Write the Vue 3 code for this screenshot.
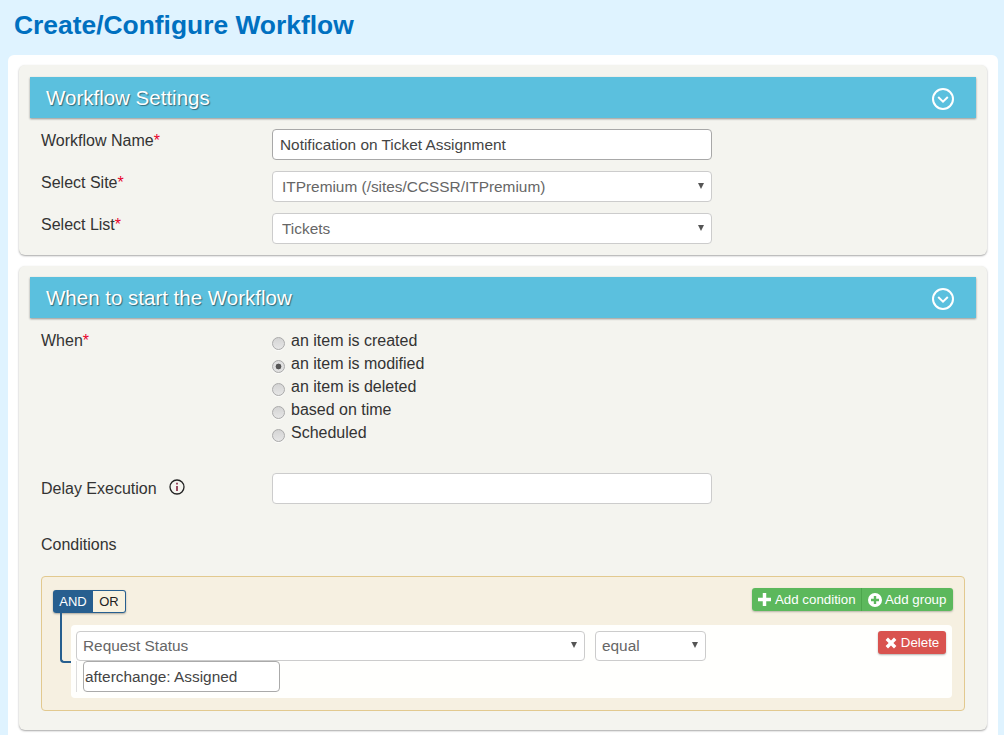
<script setup>
import { ref } from 'vue'

const triggers = ['an item is created', 'an item is modified', 'an item is deleted', 'based on time', 'Scheduled']
const selected = ref('an item is modified')
</script>

<template>
  <div class="page">
    <h1 class="title">Create/Configure Workflow</h1>
    <div class="card">
      <section class="panel">
        <header class="bar">
          <span>Workflow Settings</span>
          <svg class="chev" viewBox="0 0 22 22"><circle cx="11" cy="11" r="10" /><path d="M6.2 9 11 13.6 15.8 9" /></svg>
        </header>
        <div class="row">
          <label class="lbl">Workflow Name<i>*</i></label>
          <input class="ctl strong" value="Notification on Ticket Assignment" />
        </div>
        <div class="row">
          <label class="lbl">Select Site<i>*</i></label>
          <div class="sel ctl-w"><select class="ctl wide"><option>ITPremium (/sites/CCSSR/ITPremium)</option></select></div>
        </div>
        <div class="row">
          <label class="lbl">Select List<i>*</i></label>
          <div class="sel ctl-w"><select class="ctl wide"><option>Tickets</option></select></div>
        </div>
      </section>

      <section class="panel second">
        <header class="bar">
          <span>When to start the Workflow</span>
          <svg class="chev" viewBox="0 0 22 22"><circle cx="11" cy="11" r="10" /><path d="M6.2 9 11 13.6 15.8 9" /></svg>
        </header>
        <div class="when">
          <label class="lbl">When<i>*</i></label>
          <div class="radios">
            <label v-for="t in triggers" :key="t" class="radio">
              <input v-model="selected" type="radio" name="when" :value="t" />
              <span>{{ t }}</span>
            </label>
          </div>
        </div>
        <div class="row delay">
          <label class="lbl">Delay Execution
            <svg class="info" viewBox="0 0 16 16"><circle cx="8" cy="8" r="7" /><path d="M8 7v5" /><path class="dot" d="M8 3.8v1.6" /></svg>
          </label>
          <input class="ctl" />
        </div>
        <div class="cond-title">Conditions</div>

        <div class="group">
          <div class="toolbar">
            <div class="andor">
              <span class="and">AND</span>
              <span class="or">OR</span>
            </div>
            <div class="adds">
              <button class="add">
                <svg viewBox="0 0 12 12"><path d="M4.400 0h3.200v4.400H12v3.200H7.600V12H4.400V7.600H0V4.400h4.400z" /></svg>
                Add condition
              </button>
              <button class="add">
                <svg viewBox="0 0 14 14"><path fill-rule="evenodd" d="M7 0a7 7 0 1 1 0 14A7 7 0 0 1 7 0zM5.800 3v2.800H3v2.400h2.800V11h2.400V8.200H11V5.800H8.200V3z" /></svg>
                Add group
              </button>
            </div>
          </div>
          <div class="rule">
            <div class="rule-top">
              <div class="sel field"><select class="ctl"><option>Request Status</option></select></div>
              <div class="sel op"><select class="ctl"><option>equal</option></select></div>
              <button class="del">
                <svg viewBox="0 0 12 12"><path d="M3 .6 6 3.600 9 .6 11.400 3 8.400 6l3 3L9 11.400l-3-3-3 3L.6 9l3-3-3-3z" /></svg>
                Delete
              </button>
            </div>
            <div class="rule-val">
              <input class="val" value="afterchange: Assigned" />
            </div>
          </div>
        </div>
      </section>
    </div>
  </div>
</template>

<style>
html, body { margin: 0; height: 100%; overflow: hidden; background: #dff3ff; }
</style>

<style scoped>
.page {
  height: 735px;
  overflow: hidden;
  background: #dff3ff;
  font-family: "Liberation Sans", Arial, sans-serif;
  color: #333;
  font-size: 16px;
}
.title {
  margin: 0;
  height: 55px;
  padding: 9px 0 0 14px;
  box-sizing: border-box;
  font-size: 26.400px;
  line-height: 32px;
  font-weight: 700;
  color: #0070c0;
}
.card {
  margin: 0 6px 0 8px;
  padding: 10px 11px;
  height: 700px;
  box-sizing: border-box;
  background: #fff;
  border-radius: 6px;
}
.panel {
  padding: 12px 11px 11px;
  background: #f4f4ef;
  border-radius: 6px;
  box-shadow: 0 1px 2px rgba(0, 0, 0, 0.35);
}
.second {
  margin-top: 11px;
  padding-top: 11px;
  padding-bottom: 19px;
}
.bar {
  height: 41px;
  padding: 0 22px 0 16px;
  box-sizing: border-box;
  display: flex;
  align-items: center;
  justify-content: space-between;
  background: #5bc0de;
  color: #fff;
  font-size: 20.500px;
  line-height: 24px;
  text-shadow: 1px 1px 1px rgba(0, 0, 0, 0.45);
  box-shadow: 0 1px 2px rgba(0, 0, 0, 0.4);
}
.chev {
  width: 22px;
  height: 22px;
  margin-top: 2px;
  fill: none;
  stroke: #fff;
  stroke-width: 2;
}
.row {
  display: flex;
  align-items: flex-start;
  margin-top: 11px;
  padding-left: 11px;
}
.lbl {
  flex: 0 0 231px;
  line-height: 24px;
  color: #333;
}
.lbl i {
  color: #e8002b;
  font-style: normal;
}
.ctl {
  display: block;
  width: 440px;
  height: 31px;
  box-sizing: border-box;
  padding: 0 7px;
  font: 15.400px "Liberation Sans", Arial, sans-serif;
  color: #444;
  background: #fff;
  border: 1px solid #ccc;
  border-radius: 4px;
  outline: none;
}
.strong { border-color: #a8a8a8; }
.ctl-w { width: 440px; }
.sel { position: relative; }
.sel select {
  appearance: none;
  -webkit-appearance: none;
  width: 100%;
  color: #666;
  padding-left: 6px;
}
.sel select.wide { padding-left: 9px; }
.sel::after {
  content: "";
  position: absolute;
  right: 8px;
  top: 12px;
  border-left: 3.500px solid transparent;
  border-right: 3.500px solid transparent;
  border-top: 6px solid #555;
  pointer-events: none;
}
.when {
  display: flex;
  margin-top: 11px;
  padding-left: 11px;
}
.when .lbl { line-height: 23px; }
.radios { display: flex; flex-direction: column; }
.radio {
  display: flex;
  align-items: center;
  height: 23px;
  color: #333;
}
.radio input {
  appearance: none;
  -webkit-appearance: none;
  width: 13px;
  height: 13px;
  margin: 6px 6px 0 0;
  box-sizing: border-box;
  border: 1px solid #aaa;
  border-radius: 50%;
  background: linear-gradient(#d4d4d4, #e6e6e6);
  box-shadow: 0 1px 1px rgba(255, 255, 255, 0.8);
}
.radio input:checked {
  background: radial-gradient(circle, #555 0 2.600px, #e0e0e0 3.200px);
}
.delay { margin-top: 29px; }
.delay .lbl { line-height: 31px; }
.info {
  width: 16px;
  height: 16px;
  margin-left: 8px;
  vertical-align: -1px;
  fill: none;
  stroke: #222;
  stroke-width: 1.300;
}
.info path { stroke: #7a1230; stroke-width: 1.500; }
.cond-title {
  margin-top: 30px;
  padding-left: 11px;
  line-height: 22px;
}
.group {
  margin: 20px 11px 0;
  padding: 11px 11px 12px;
  border: 1px solid #e2c98f;
  border-radius: 4px;
  background: #f6f0e1;
}
.toolbar {
  display: flex;
  justify-content: space-between;
  align-items: flex-start;
  height: 37px;
}
.andor {
  display: flex;
  margin-top: 2px;
  height: 23px;
  font-size: 13px;
  line-height: 23px;
  border-radius: 3px;
  box-shadow: 0 1px 2px rgba(0, 0, 0, 0.3);
}
.and {
  width: 40px;
  text-align: center;
  color: #fff;
  background: #275f8f;
  border-radius: 3px 0 0 3px;
}
.or {
  width: 33px;
  box-sizing: border-box;
  text-align: center;
  color: #222;
  line-height: 21px;
  background: #f8f2df;
  border: 1px solid #275f8f;
  border-left: none;
  border-radius: 0 3px 3px 0;
}
.adds {
  display: flex;
  border-radius: 3px;
  box-shadow: 0 1px 2px rgba(0, 0, 0, 0.25);
}
.add, .del {
  display: flex;
  align-items: center;
  height: 23px;
  padding: 0;
  border: none;
  color: #fff;
  font: 13.300px "Liberation Sans", Arial, sans-serif;
}
.add {
  background: #5cb85c;
  padding: 0 0 0 6px;
  box-sizing: border-box;
  white-space: nowrap;
}
.add:first-child {
  gap: 4px;
  border-radius: 3px 0 0 3px;
  width: 110px;
  border-right: 1px solid #4ca64c;
}
.add:first-child svg { width: 13px; height: 13px; }
.add:last-child {
  border-radius: 0 3px 3px 0;
  width: 91px;
  gap: 3px;
}
.add:last-child svg { width: 14px; height: 14px; }
.add svg, .del svg { fill: #fff; flex: none; }
.rule {
  position: relative;
  margin: 0 1px 0 18px;
  padding: 6px 6px 6px 5px;
  background: #fffffd;
  border-radius: 4px;
}
.rule::before {
  content: "";
  position: absolute;
  left: -11px;
  top: -12px;
  width: 9px;
  height: 48px;
  border-left: 2px solid #275f8f;
  border-bottom: 2px solid #275f8f;
  border-bottom-left-radius: 4px;
}
.rule-top {
  display: flex;
  align-items: flex-start;
  height: 30px;
}
.field { width: 509px; }
.op { width: 111px; margin-left: 10px; }
.rule-top .ctl { height: 30px; padding-bottom: 2px; }
.rule-top .sel::after { top: 11px; }
.del {
  margin-left: auto;
  width: 68px;
  justify-content: center;
  gap: 4px;
  background: #d9534f;
  border-radius: 3px;
  box-shadow: 0 1px 2px rgba(0, 0, 0, 0.3);
}
.del svg { width: 12px; height: 12px; }
.rule-val {
  height: 31px;
  padding-left: 6px;
  border-left: 1px solid #ddd;
}
.val {
  display: block;
  width: 197px;
  height: 31px;
  box-sizing: border-box;
  padding: 0 1px;
  font: 15.400px "Liberation Sans", Arial, sans-serif;
  color: #444;
  border: 1px solid #aaa;
  border-radius: 4px;
  background: #fff;
  outline: none;
}
</style>
